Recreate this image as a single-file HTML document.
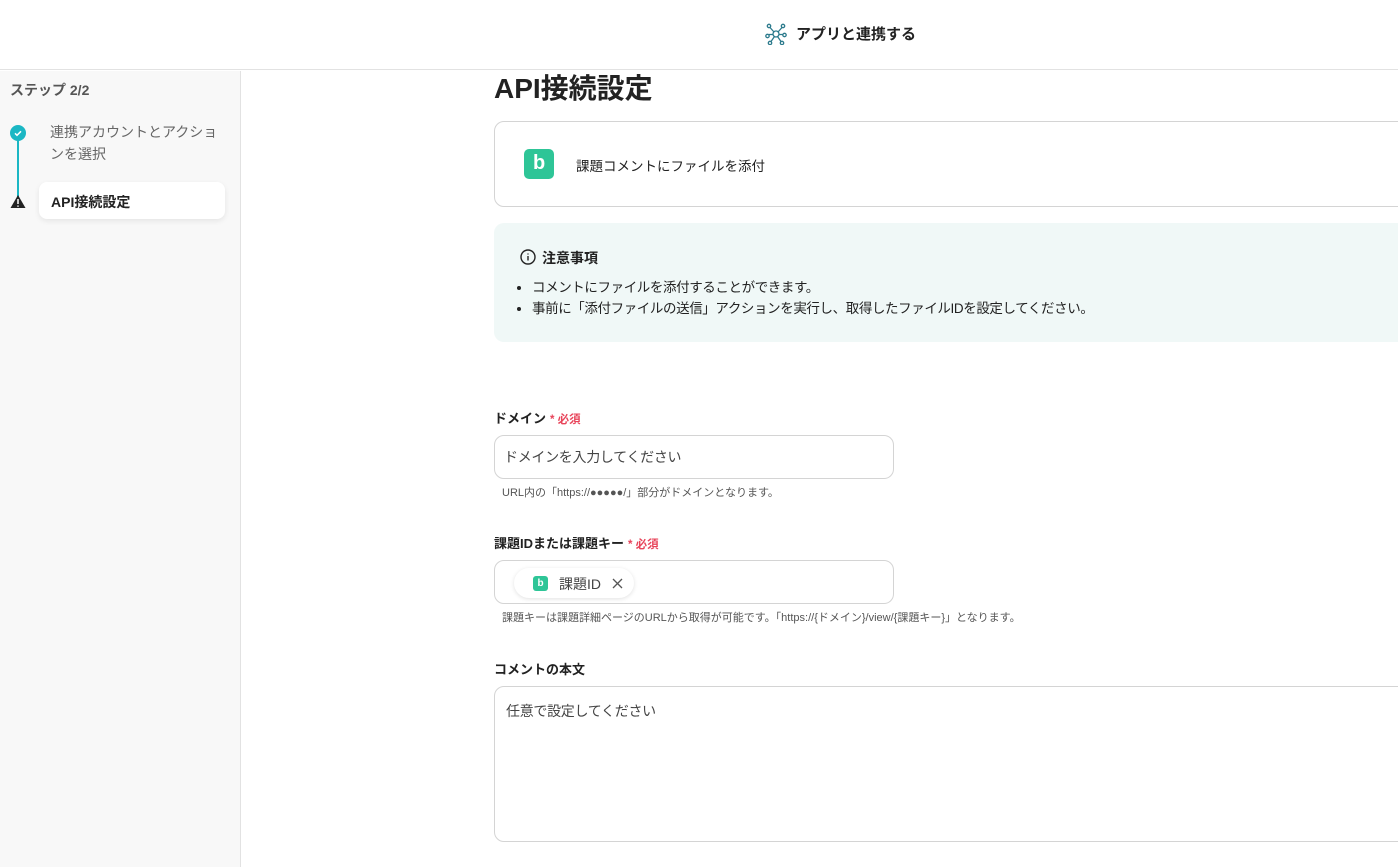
<!DOCTYPE html>
<html><head><meta charset="utf-8"><style>
*{box-sizing:border-box;margin:0;padding:0}
body{width:1398px;height:867px;overflow:hidden;background:#fff;font-family:"Liberation Sans","Noto Sans CJK JP",sans-serif;color:#222;position:relative}
.hdr{position:absolute;left:0;top:0;width:1398px;height:70px;border-bottom:1px solid #e2e2e2;background:#fff}
.hdr .t{position:absolute;left:796px;top:23px;font-size:15px;font-weight:bold;color:#222}
.side{position:absolute;left:0;top:71px;width:241px;height:796px;background:#f8f8f8;border-right:1px solid #e2e2e2}
.abs{position:absolute}
.box{position:absolute;border:1px solid #d4d4d4;border-radius:10px;background:#fff}
.lbl{position:absolute;font-size:13px;font-weight:bold;color:#222}
.req{color:#e8445a;font-size:11.5px;font-weight:bold;margin-left:4px}
.hint{position:absolute;font-size:11px;color:#555}
.bl{width:30px;height:30px;border-radius:5px;background:#2ec597;position:absolute}
</style></head><body>
<div class="hdr">
<svg class="abs" style="left:765px;top:23px" width="22" height="22" viewBox="0 0 22 22" fill="none" stroke="#2b7a8c" stroke-width="1.3"><circle cx="11" cy="11" r="3"/><circle cx="4" cy="3" r="1.7"/><circle cx="18" cy="3" r="1.7"/><circle cx="2.5" cy="13" r="1.7"/><circle cx="19.5" cy="12" r="1.7"/><circle cx="5" cy="20" r="1.7"/><circle cx="17" cy="20" r="1.7"/><path d="M9 9 5 4.5M13 9l4-4.5M8 11.5H4M14 11.5h4M9.5 13.5 6 18.5M12.5 13.5 16 18.5"/></svg>
<div class="t">アプリと連携する</div>
</div>
<div class="side">
<div class="abs" style="left:10px;top:9px;font-size:14px;font-weight:bold;color:#555">ステップ 2/2</div>
<div class="abs" style="left:17px;top:61px;width:2px;height:68px;background:#1bb7c4"></div>
<div class="abs" style="left:10px;top:54px;width:16px;height:16px;border-radius:50%;background:#1bb7c4"></div>
<svg class="abs" style="left:10px;top:54px" width="16" height="16"><path d="M5 8.3l2 2 4-4" stroke="#fff" stroke-width="1.5" fill="none"/></svg>
<div class="abs" style="left:50px;top:50px;font-size:14px;line-height:22px;color:#666;width:170px">連携アカウントとアクションを選択</div>
<svg class="abs" style="left:10px;top:123px" width="16" height="15"><path d="M8 1 15.5 14H.5z" fill="#222"/><path d="M8 5v5M8 11.5v1.2" stroke="#fff" stroke-width="1.5"/></svg>
<div class="abs" style="left:39px;top:111px;width:186px;height:37px;background:#fff;border-radius:8px;box-shadow:0 2px 6px rgba(0,0,0,.08);font-size:14px;font-weight:bold;padding:10px 12px">API接続設定</div>
</div>
<div class="abs" style="left:494px;top:67px;font-size:28px;font-weight:bold;color:#222">API接続設定</div>
<div class="box" style="left:494px;top:121px;width:920px;height:86px">
<div class="bl" style="left:29px;top:27px"></div>
<div class="abs" style="left:38px;top:30px;color:#fff;font-weight:bold;font-size:20px">b</div>
<div class="abs" style="left:81px;top:33px;font-size:13.5px">課題コメントにファイルを添付</div>
</div>
<div class="abs" style="left:494px;top:223px;width:920px;height:119px;background:#f0f8f7;border-radius:10px">
<svg class="abs" style="left:26px;top:26px" width="16" height="16" fill="none" stroke="#222" stroke-width="1.4"><circle cx="8" cy="8" r="7"/><path d="M8 7v4.5M8 4.5v1"/></svg>
<div class="abs" style="left:48px;top:25px;font-size:14px;font-weight:bold">注意事項</div>
<ul class="abs" style="left:38px;top:54px;font-size:13.5px;line-height:21px;list-style:disc;letter-spacing:-0.4px"><li>コメントにファイルを添付することができます。</li><li>事前に「添付ファイルの送信」アクションを実行し、取得したファイルIDを設定してください。</li></ul>
</div>
<div class="lbl" style="left:494px;top:408px">ドメイン<span class="req">* 必須</span></div>
<div class="box" style="left:494px;top:435px;width:400px;height:44px"><div class="abs" style="left:9px;top:11px;font-size:14px;color:#444;letter-spacing:-0.3px">ドメインを入力してください</div></div>
<div class="hint" style="left:502px;top:484px">URL内の「https://●●●●●/」部分がドメインとなります。</div>
<div class="lbl" style="left:494px;top:533px">課題IDまたは課題キー<span class="req">* 必須</span></div>
<div class="box" style="left:494px;top:560px;width:400px;height:44px">
<div class="abs" style="left:19px;top:7px;width:120px;height:30px;border-radius:15px;background:#fff;box-shadow:0 1px 4px rgba(0,0,0,.12)">
<div class="abs" style="left:19px;top:8px;width:15px;height:15px;border-radius:3px;background:#2ec597;color:#fff;font-size:10px;font-weight:bold;text-align:center;line-height:15px">b</div>
<div class="abs" style="left:45px;top:6px;font-size:14px;color:#444">課題ID</div>
<svg class="abs" style="left:98px;top:10px" width="11" height="11"><path d="M1 1l9 9M10 1l-9 9" stroke="#555" stroke-width="1.3"/></svg>
</div></div>
<div class="hint" style="left:502px;top:609px">課題キーは課題詳細ページのURLから取得が可能です。「https://{ドメイン}/view/{課題キー}」となります。</div>
<div class="lbl" style="left:494px;top:659px">コメントの本文</div>
<div class="box" style="left:494px;top:686px;width:920px;height:156px"><div class="abs" style="left:11px;top:14px;font-size:14px;color:#444;letter-spacing:-0.3px">任意で設定してください</div></div>
</body></html>
